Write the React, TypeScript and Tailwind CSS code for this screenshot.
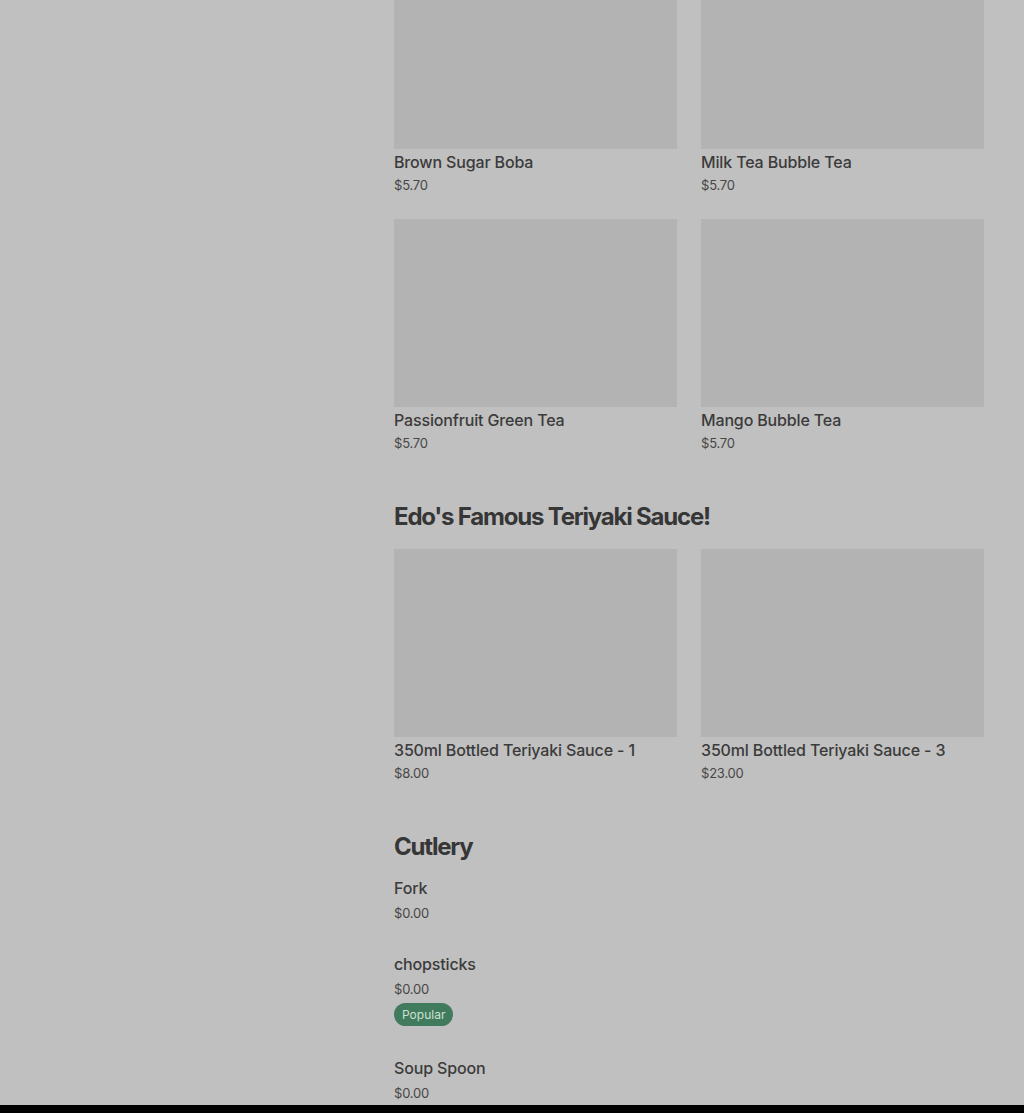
import React from "react";

type Item = { name: string; price: string };

const bubble: Item[] = [
  { name: "Brown Sugar Boba", price: "$5.70" },
  { name: "Milk Tea Bubble Tea", price: "$5.70" },
  { name: "Passionfruit Green Tea", price: "$5.70" },
  { name: "Mango Bubble Tea", price: "$5.70" },
];

const sauce: Item[] = [
  { name: "350ml Bottled Teriyaki Sauce - 1", price: "$8.00" },
  { name: "350ml Bottled Teriyaki Sauce - 3", price: "$23.00" },
];

const cutlery: (Item & { popular?: boolean })[] = [
  { name: "Fork", price: "$0.00" },
  { name: "chopsticks", price: "$0.00", popular: true },
  { name: "Soup Spoon", price: "$0.00" },
];

function Card({ item }: { item: Item }) {
  return (
    <div className="flex flex-col">
      <div className="h-[188px] bg-[#b3b3b3]" />
      <div className="text-[16px] leading-[24px] mt-[1px] font-medium tracking-[-0.15px] text-[#3b3b3b]">{item.name}</div>
      <div className="text-[13px] leading-[20px] mt-[1px] tracking-[-0.2px] text-[#474747]">{item.price}</div>
    </div>
  );
}

export default function App() {
  return (
    <div
      className="min-h-[1113px] bg-[#c0c0c0] overflow-hidden"
      style={{ fontFamily: "Inter, 'Noto Sans', sans-serif" }}
    >
      <div className="ml-[394px] w-[590px] mt-[-39px] flex flex-col">
        <div className="grid grid-cols-2 gap-x-6 gap-y-6">
          {bubble.map((it) => (
            <Card key={it.name} item={it} />
          ))}
        </div>
        <h2 className="mt-[48px] text-[24px] leading-[32px] font-bold tracking-[-1.2px] text-[#363636]">
          Edo's Famous Teriyaki Sauce!
        </h2>
        <div className="mt-[16px] grid grid-cols-2 gap-x-6 gap-y-6">
          {sauce.map((it) => (
            <Card key={it.name} item={it} />
          ))}
        </div>
        <h2 className="mt-[48px] text-[24px] leading-[32px] font-bold tracking-[-1.2px] text-[#363636]">
          Cutlery
        </h2>
        <div className="mt-[13px] flex flex-col gap-[29px]">
          {cutlery.map((it) => (
            <div key={it.name} className="flex flex-col">
              <div className="text-[16px] leading-[24px] font-medium tracking-[-0.15px] text-[#3b3b3b]">{it.name}</div>
              <div className="text-[13px] leading-[20px] mt-[3px] tracking-[-0.2px] text-[#474747]">{it.price}</div>
              {it.popular && (
                <div className="mt-[4px] mb-[1px] self-start h-[23px] px-[8px] rounded-full bg-[#3f7b5c] text-[#cfe0d5] text-[12px] leading-[23px]">
                  Popular
                </div>
              )}
            </div>
          ))}
        </div>
      </div>
      <div className="fixed left-0 right-0 bottom-0 h-[8px] bg-black" />
    </div>
  );
}
